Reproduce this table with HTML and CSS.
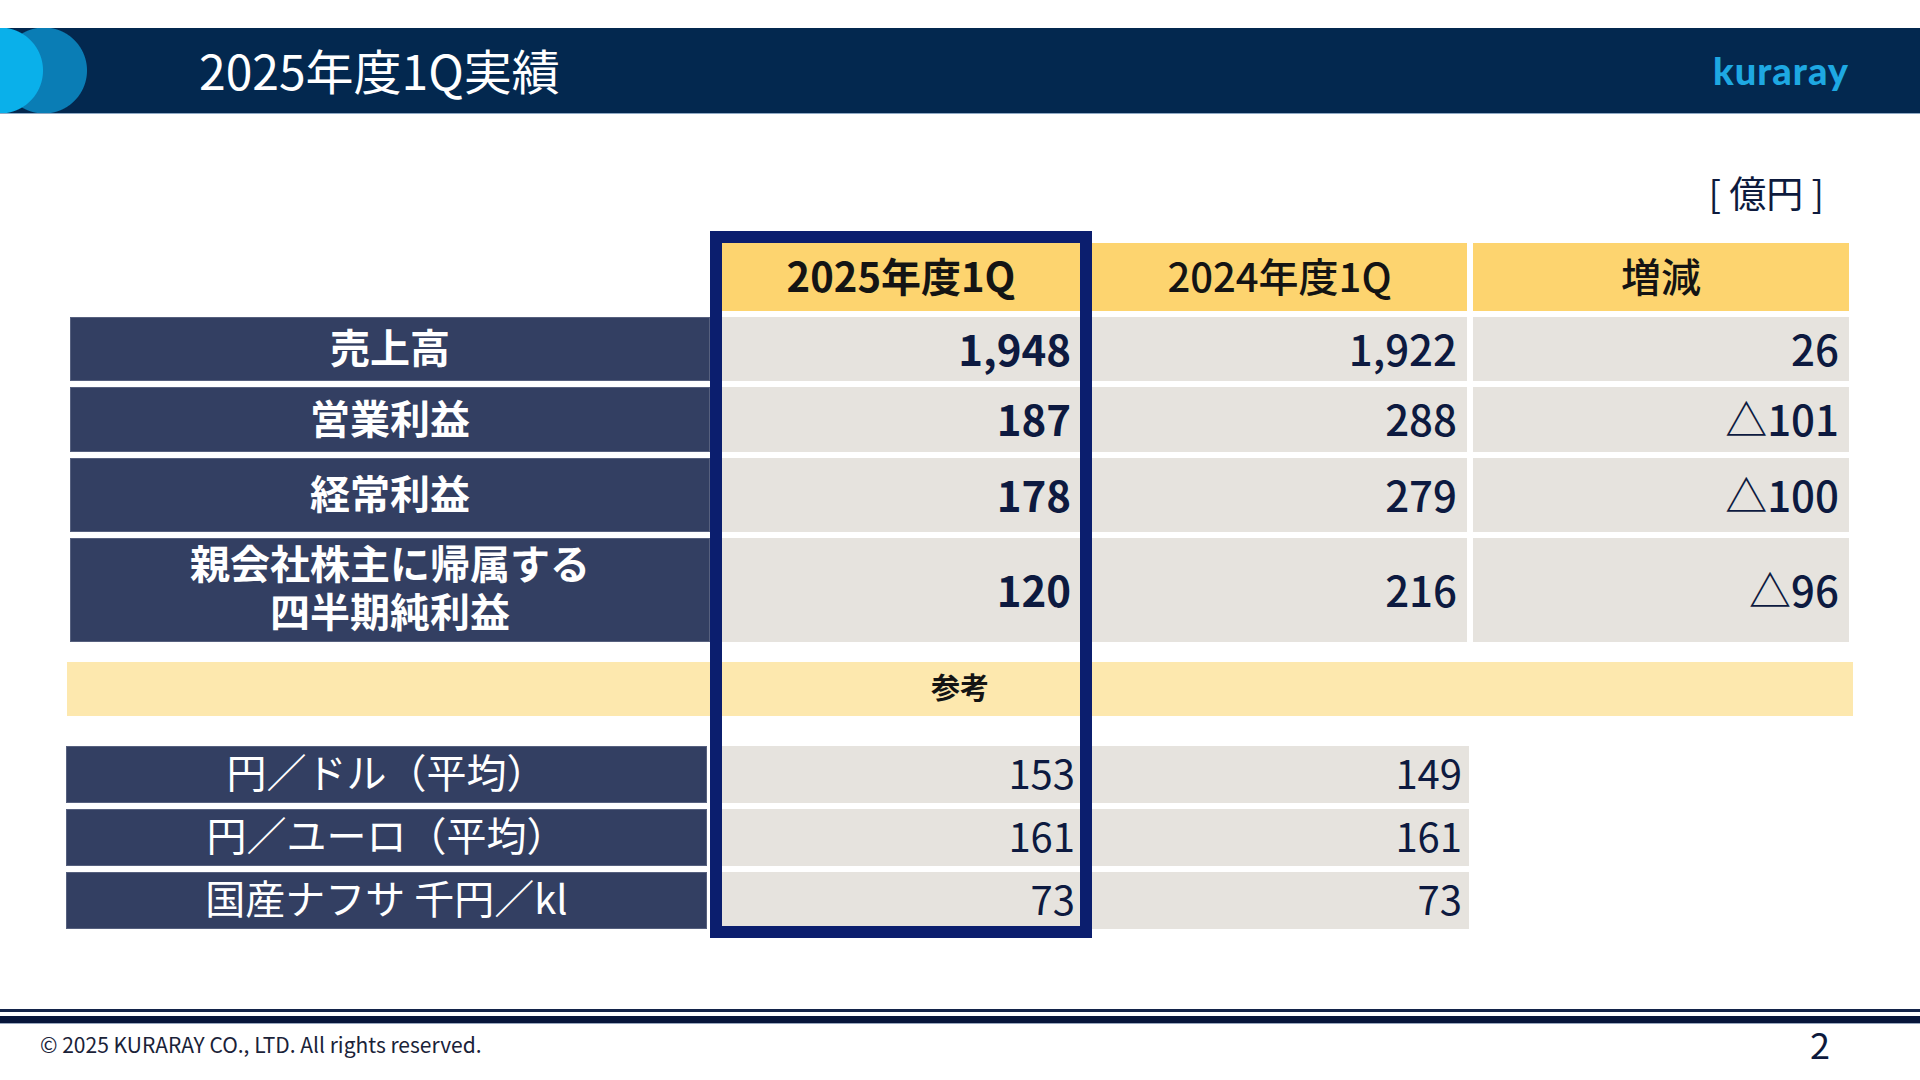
FILE: index.html
```html
<!DOCTYPE html>
<html lang="ja">
<head>
<meta charset="utf-8">
<title>2025年度1Q実績</title>
<link rel="stylesheet" href="styles.css">
</head>
<body>
<div class="slide">
  <header class="topbar">
    <div class="mark"></div>
    <h1 class="title">2025年度1Q実績</h1>
    <div class="logo">kuraray</div>
  </header>

  <div class="unit-row"><span class="unit">[ 億円 ]</span></div>

  <div class="table">
    <div class="row g1">
      <div class="hd c2 hd-main">2025年度1Q</div>
      <div class="hd c3">2024年度1Q</div>
      <div class="hd c4">増減</div>
    </div>

    <div class="row g2">
      <div class="label c1">売上高</div>
      <div class="val c2 main">1,948</div>
      <div class="val c3">1,922</div>
      <div class="val c4">26</div>
    </div>

    <div class="row g3">
      <div class="label c1">営業利益</div>
      <div class="val c2 main">187</div>
      <div class="val c3">288</div>
      <div class="val c4">△101</div>
    </div>

    <div class="row g4">
      <div class="label c1">経常利益</div>
      <div class="val c2 main">178</div>
      <div class="val c3">279</div>
      <div class="val c4">△100</div>
    </div>

    <div class="row g5">
      <div class="label c1 label-2l">親会社株主に帰属する<br>四半期純利益</div>
      <div class="val c2 main">120</div>
      <div class="val c3">216</div>
      <div class="val c4">△96</div>
    </div>

    <div class="row g7">
      <div class="ref">参考</div>
    </div>

    <div class="row g9">
      <div class="label c1 sub">円／ドル（平均）</div>
      <div class="val c2 sub main">153</div>
      <div class="val c3 sub">149</div>
    </div>

    <div class="row g10">
      <div class="label c1 sub">円／ユーロ（平均）</div>
      <div class="val c2 sub main">161</div>
      <div class="val c3 sub">161</div>
    </div>

    <div class="row g11">
      <div class="label c1 sub">国産ナフサ 千円／kl</div>
      <div class="val c2 sub main">73</div>
      <div class="val c3 sub">73</div>
    </div>

    <div class="highlight"></div>
  </div>

  <footer class="footer">
    <div class="rule"></div>
    <div class="foot-row">
      <span class="copy">© 2025 KURARAY CO., LTD. All rights reserved.</span>
      <span class="page">2</span>
    </div>
  </footer>
</div>
</body>
</html>
```

FILE: styles.css
```css
* { box-sizing: border-box; }
html, body { margin: 0; padding: 0; }
body {
  width: 1920px;
  height: 1080px;
  background: #ffffff;
  font-family: "Noto Sans CJK JP", "Noto Sans", sans-serif;
  color: #0d1a40;
  overflow: hidden;
}
.slide {
  width: 1920px;
  height: 1080px;
  display: flex;
  flex-direction: column;
}

/* ---------- top bar ---------- */
.topbar {
  margin-top: 28px;
  height: 86px;
  background: #03284f;
  border-bottom: 1px solid #8fa9c4;
  display: flex;
  align-items: center;
  padding-right: 71px;
  flex: none;
}
.mark {
  width: 88px;
  height: 85px;
  flex: none;
  align-self: flex-start;
  background:
    radial-gradient(circle at 0px 50%, #0ab0ea 42.5px, rgba(10,176,234,0) 43.5px),
    radial-gradient(circle at 44px 50%, #0a7db5 42.5px, rgba(10,125,181,0) 43.5px);
}
.title {
  margin: 0 0 0 111px;
  padding-bottom: 4px;
  font-size: 48px;
  font-weight: 400;
  color: #ffffff;
  line-height: 1;
}
.logo {
  margin-left: auto;
  font-family: "Lato", sans-serif;
  font-weight: 900;
  font-size: 38px;
  color: #1ea8e2;
  letter-spacing: 1px;
  line-height: 1;
  padding-bottom: 2px;
}

/* ---------- unit ---------- */
.unit-row {
  display: flex;
  justify-content: flex-end;
  padding-right: 96px;
  margin-top: 58px;
  height: 42px;
  flex: none;
}
.unit {
  font-size: 37px;
  line-height: 40px;
  color: #0d1a3d;
}

/* ---------- table ---------- */
.table {
  margin-top: 29px;
  margin-left: 70px;
  display: grid;
  grid-template-columns: 640px 382px 375px 382px;
  grid-template-rows: 68px 64px 65px 74px 104px 8px 54px 18px 57px 57px 57px;
  row-gap: 6px;
  column-gap: 0;
  flex: none;
}
.row { display: contents; }
.g1 > * { grid-row: 1; }
.g2 > * { grid-row: 2; }
.g3 > * { grid-row: 3; }
.g4 > * { grid-row: 4; }
.g5 > * { grid-row: 5; }
.g7 > * { grid-row: 7; }
.g9 > * { grid-row: 9; }
.g10 > * { grid-row: 10; }
.g11 > * { grid-row: 11; }
.c1 { grid-column: 1; }
.c2 { grid-column: 2; }
.c3 { grid-column: 3; }
.c4 { grid-column: 4; margin-left: 6px; }

.hd {
  background: #fdd46f;
  display: flex;
  align-items: center;
  justify-content: center;
  font-size: 40px;
  font-weight: 500;
  color: #141414;
  line-height: 1;
  padding-bottom: 5px;
}
.hd-main { font-weight: 700; }

.label {
  background: #333f62;
  border: 1px solid #56607e;
  color: #ffffff;
  display: flex;
  align-items: center;
  justify-content: center;
  text-align: center;
  font-size: 40px;
  font-weight: 700;
  line-height: 48px;
  padding-bottom: 6px;
}
.label-2l { padding-bottom: 9px; }
.label.sub {
  font-weight: 400;
  font-size: 40px;
  margin-left: -4px;
  margin-right: 3px;
  padding-bottom: 7px;
}

.val {
  background: #e6e3de;
  display: flex;
  align-items: center;
  justify-content: flex-end;
  padding-right: 10px;
  font-size: 42px;
  font-weight: 500;
  color: #0d1a40;
  line-height: 1;
  padding-bottom: 3px;
}
.val.main {
  font-weight: 700;
  padding-right: 21px;
}
.val.sub {
  font-weight: 400;
  font-size: 40px;
  padding-right: 7px;
  margin-right: -2px;
  padding-bottom: 5px;
}
.val.sub.main {
  padding-right: 17px;
  margin-right: 0;
}

.ref {
  grid-column: 1 / -1;
  margin-left: -3px;
  margin-right: -4px;
  background: #fde8ae;
  display: flex;
  align-items: center;
  justify-content: center;
  font-size: 29px;
  font-weight: 700;
  color: #141414;
  line-height: 1;
  padding-bottom: 6px;
}

.highlight {
  grid-column: 2;
  grid-row: 1 / -1;
  margin: -12px 0 -9px 0;
  border: 12px solid #0b1e6e;
  pointer-events: none;
}

/* ---------- footer ---------- */
.footer {
  margin-top: auto;
  margin-bottom: 11px;
}
.rule {
  height: 14px;
  border-top: 3px solid #14244a;
  border-bottom: 7px solid #07153a;
  box-shadow: 0 1px 0 #9aa8bf;
}
.foot-row {
  display: flex;
  align-items: center;
  justify-content: space-between;
  height: 46px;
  padding: 0 90px 0 40px;
}
.copy {
  font-size: 21px;
  color: #1a2238;
  line-height: 1;
  padding-bottom: 4px;
}
.page {
  font-size: 36px;
  color: #0d1a3d;
  line-height: 1;
  padding-bottom: 6px;
}
```
